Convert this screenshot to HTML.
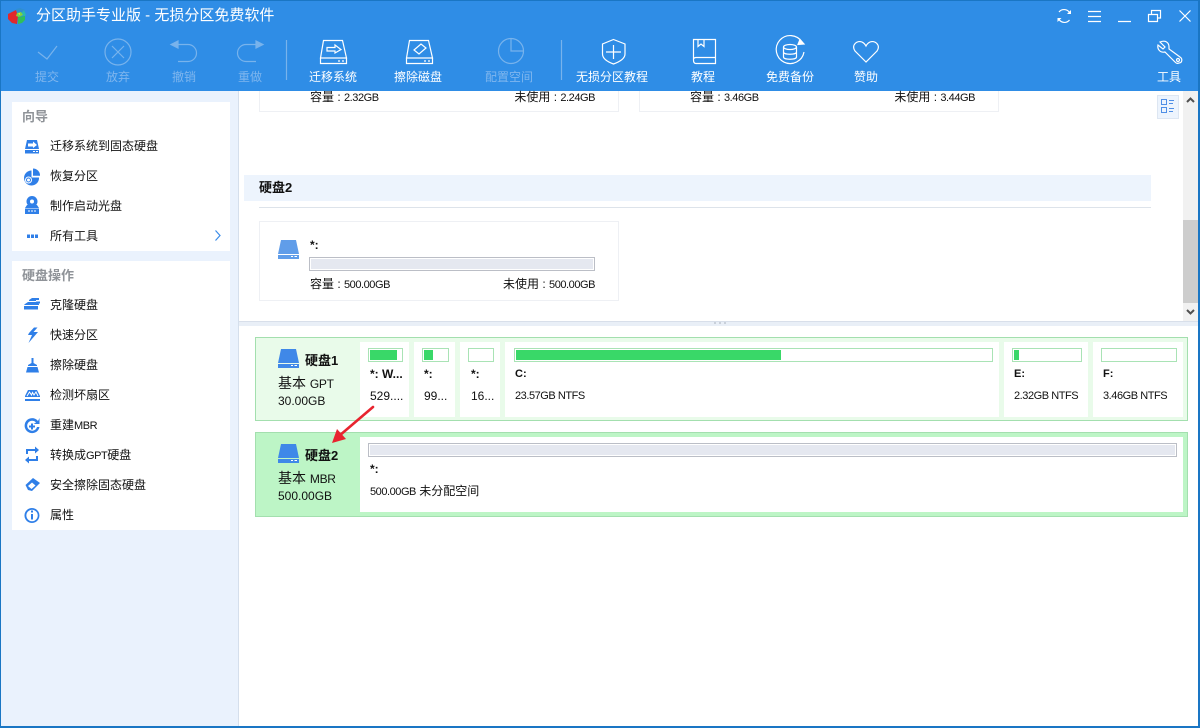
<!DOCTYPE html>
<html lang="zh"><head><meta charset="utf-8"><title>分区助手专业版</title>
<style>
html,body{margin:0;padding:0}
body{width:1200px;height:728px;position:relative;overflow:hidden;background:#fff;font-family:"Liberation Sans","Noto Sans CJK SC",sans-serif;font-size:12px;color:#111}
div,svg,span{position:absolute}
span span,.t span{position:static}
.t{line-height:16px;white-space:nowrap}
.l{font-size:11px;letter-spacing:-.45px}
.c{text-align:center;transform:translateX(-50%)}
.r{transform:translateX(-100%)}
.w{color:#fff}.d{color:#7fb6ee}
.b{font-weight:bold}
.bb{font-weight:bold;font-size:13px}
.h{color:#8f9398;font-weight:bold;font-size:13px}
.card{background:#fff}
.bar{border:1px solid #a9e3b5;background:#fff;height:12px;box-sizing:content-box}
.fill{background:#39d868;top:1px;left:1px;height:10px}
.gray{border:1px solid #bbbec6;background:#e5e8f0;outline:none;box-shadow:inset 0 0 0 1px #fff}
</style></head><body>
<div style="left:0;top:0;width:1200px;height:91px;background:#2f8de6"></div>
<div style="left:0;top:0;width:1200px;height:1px;background:#1a76c4"></div>
<div style="left:1px;top:91px;width:238px;height:636px;background:#eaf2fd"></div>
<div style="left:238px;top:91px;width:1px;height:636px;background:#d5dfec"></div>
<div style="left:12px;top:102px;width:218px;height:149px;background:#fff"></div>
<div style="left:12px;top:261px;width:218px;height:269px;background:#fff"></div>

<svg style="left:7px;top:7px" width="20" height="18" viewBox="0 0 20 18"><path d="M1 7 9 3 11 9 10 17 5 16 1 12Z" fill="#e2282c"/><path d="M9 2 13 1 18 3 14 7 10 5Z" fill="#2f8fd0"/><path d="M17 3 19 8 18 9 13 8Z" fill="#2bb8b0"/><path d="M10 6 14 5 16 8 12 10 9 9Z" fill="#7fd43f"/><path d="M11 6.500 13 6 13 8Z" fill="#e8e24a"/><path d="M11 10 18 9 18 13 15 16 11 17Z" fill="#2fbf5a"/></svg>
<span class="t w" style="left:36px;top:7px;font-size:15px;line-height:18px">分区助手专业版 - 无损分区免费软件</span>

<svg style="left:0;top:0" width="1200" height="91" fill="none" stroke="#fff" stroke-width="1.2">
<g stroke="#78b3ec">
<path d="M38 52 47 59 57 46"/><circle cx="118" cy="52" r="13"/><path d="M112 46 124 58M124 46 112 58"/>
<path d="M177 44.500H188a8.500 8.500 0 0 1 0 17H178"/><path d="M171 44.500 178 41V48Z" fill="#78b3ec"/>
<path d="M256 44.500H246a8.500 8.500 0 0 0 0 17H256"/><path d="M263 44.500 256 41V48Z" fill="#78b3ec"/>
<circle cx="511" cy="51" r="12.500"/><path d="M511 38.500V51H524"/>
<path d="M286.500 40V80M561.500 40V80"/>
</g>
<path d="M323.500 40.500H342.500L346.500 58H320.500ZM320.500 58H346.500V63.500H320.500Z"/><path d="M327 47.500H335V45L341 49.500 335 53V51H327Z"/><path d="M338 61H340M342 61H344"/>
<path d="M409.500 40.500H428.500L432.500 58H406.500ZM406.500 58H432.500V63.500H406.500Z"/><path d="M414 50 421 44 426 48 419 54Z"/><path d="M424 61H426M428 61H430"/>
<path d="M613.500 39.500 625 44V54C625 59 619 62 613.500 64 608 62 602.500 59 602.500 54V44Z"/><path d="M613.500 45V59M606 52H621"/>
<path d="M693.500 39.500H715.500V63.500H696C694 63.500 693.500 62 693.500 60ZM693.500 59C694 57.500 695 57.500 696 57.500H715M698 40V46.500L701 44 704 46.500V40"/>
<path d="M802 42A14 14 0 1 0 804 52"/><path d="M800 39.500 804 44 798 44.500Z" fill="#fff"/>
<ellipse cx="790" cy="47" rx="6.500" ry="2.500"/><path d="M783.500 47V57C783.500 60 796.500 60 796.500 57V47M783.500 52C783.500 55 796.500 55 796.500 52"/>
<path d="M866 62 855 51C851 45 857 40 862 42 864 43 865 44 866 46 867 44 868 43 870 42 875 40 881 45 877 51Z"/>
<path d="M1160 42C1165 40 1169 42 1169 47L1169 49 1180 57C1183 59 1182 63 1179 63 1177 64 1176 63 1175 62L1165 52C1160 53 1157 49 1158 45L1163 49 1165 47Z"/><circle cx="1178" cy="60" r="1.500"/>
<path d="M1059 12A6.500 6.500 0 0 1 1069.500 12.500M1069.500 20A6.500 6.500 0 0 1 1059 19.500"/><path d="M1071 10V14H1067ZM1057.500 22V18H1061.500Z" fill="#fff" stroke="none"/>
<path d="M1088 11.500H1101M1088 16.500H1101M1088 21.500H1101M1118 21.500H1131"/>
<path d="M1148.500 14.500H1157.500V21.500H1148.500ZM1151.500 14V10.500H1160.500V18H1158"/>
<path d="M1179.500 10.500 1190.500 21.500M1190.500 10.500 1179.500 21.500"/>
</svg>

<span class="t d c" style="left:47px;top:69px">提交</span>
<span class="t d c" style="left:118px;top:69px">放弃</span>
<span class="t d c" style="left:184px;top:69px">撤销</span>
<span class="t d c" style="left:250px;top:69px">重做</span>
<span class="t w c" style="left:333px;top:69px">迁移系统</span>
<span class="t w c" style="left:418px;top:69px">擦除磁盘</span>
<span class="t d c" style="left:509px;top:69px">配置空间</span>
<span class="t w c" style="left:612px;top:69px">无损分区教程</span>
<span class="t w c" style="left:703px;top:69px">教程</span>
<span class="t w c" style="left:790px;top:69px">免费备份</span>
<span class="t w c" style="left:866px;top:69px">赞助</span>
<span class="t w c" style="left:1169px;top:69px">工具</span>

<span class="t h" style="left:22px;top:109px">向导</span>
<span class="t" style="left:50px;top:138px">迁移系统到固态硬盘</span>
<span class="t" style="left:50px;top:168px">恢复分区</span>
<span class="t" style="left:50px;top:198px">制作启动光盘</span>
<span class="t" style="left:50px;top:228px">所有工具</span>
<span class="t h" style="left:22px;top:268px">硬盘操作</span>
<span class="t" style="left:50px;top:297px">克隆硬盘</span>
<span class="t" style="left:50px;top:327px">快速分区</span>
<span class="t" style="left:50px;top:357px">擦除硬盘</span>
<span class="t" style="left:50px;top:387px">检测坏扇区</span>
<span class="t" style="left:50px;top:417px">重建<span class="l">MBR</span></span>
<span class="t" style="left:50px;top:447px">转换成<span class="l">GPT</span>硬盘</span>
<span class="t" style="left:50px;top:477px">安全擦除固态硬盘</span>
<span class="t" style="left:50px;top:507px">属性</span>

<svg style="left:0;top:91px" width="240" height="440" viewBox="0 91 240 440" fill="#2f7fe8">
<path d="M27 140H37L39 149H25ZM25 150H39V153.500H25Z"/><path d="M28 143.500H33V141.500L37 145 33 148V146.500H28Z" fill="#fff"/><path d="M33 151.500H35M36 151.500H38" stroke="#fff"/>
<path d="M31.500 170.500V177.500H39A7.500 7.500 0 1 1 31.500 170.500Z"/><path d="M33 168.500A7 7 0 0 1 40 175.800H33Z"/><circle cx="28.500" cy="180" r="3.500" fill="#fff"/><circle cx="28.500" cy="180" r="2" fill="none" stroke="#2f7fe8"/>
<circle cx="32" cy="201.500" r="5.500"/><circle cx="32" cy="201.500" r="2" fill="#fff"/><path d="M27 205H37L39 208H25ZM25 208.500H39V214H25Z"/><path d="M28 211H30M31 211H33M34 211H36" stroke="#fff"/>
<path d="M27 234.500H30V238H27ZM31 234.500H34V238H31ZM35 234.500H38V238H35Z"/>
<path d="M25 304 28 302H37L39 304V305H24ZM24 306H38V309.500H24Z"/><path d="M29 300 32 298H39V300H36V301H29ZM36 301.500H40V303.500H37Z"/>
<path d="M34 327.500 29 333 28 335H32L28.500 343 38 332H33.500L37.500 327.500Z"/>
<path d="M31.500 358H33.500V363L37 365V366H28V365L31.500 363ZM27.500 367H37.500L39 372.500H26Z"/>
<path d="M25 396 28 390H37L40 396V397H25ZM25 399H40V401H25Z"/><path d="M27 396 29.500 392 31.500 395 32.500 392.500 34 395 36 392 38 396" stroke="#fff" fill="none"/>
<path d="M38 421A7.500 7.500 0 1 0 39.500 427H37A5 5 0 1 1 36 422.500L33.500 424H39.500V418Z"/><path d="M31 423.500H33V425.500H35V427.500H33V429.500H31V427.500H29V425.500H31Z"/>
<path d="M26 449H35V446.500L39 450 35 453.500V451H28V454H26ZM38 461H29V463.500L25 460 29 456.500V459H36V456H38Z"/>
<path d="M25.500 485 33 478 40 483 32 491 28 490Z"/><path d="M28 486 32 482.500 35.500 485.500 31.500 489Z" fill="#fff"/>
<path fill-rule="evenodd" d="M32 508A7.500 7.500 0 1 1 31.900 508ZM32 509.800A5.700 5.700 0 1 0 32.100 509.800Z"/><path d="M31 510.500H33V512.500H31ZM31 514H33V519.500H31Z"/>
<path d="M215.500 230.500 220 235.500 215.500 240.500" fill="none" stroke="#3b8ce8" stroke-width="1.200"/>
</svg>

<div style="left:259px;top:91px;width:358px;height:20px;border:1px solid #eef0f4;border-top:0;background:#fff"></div>
<div style="left:639px;top:91px;width:358px;height:20px;border:1px solid #eef0f4;border-top:0;background:#fff"></div>
<span class="t" style="left:310px;top:89px">容量 : <span class="l">2.32GB</span></span>
<span class="t r" style="left:595px;top:89px">未使用 : <span class="l">2.24GB</span></span>
<span class="t" style="left:690px;top:89px">容量 : <span class="l">3.46GB</span></span>
<span class="t r" style="left:975px;top:89px">未使用 : <span class="l">3.44GB</span></span>

<div style="left:244px;top:175px;width:907px;height:26px;background:#edf4fd"></div>
<span class="t bb" style="left:259px;top:180px">硬盘2</span>
<div style="left:259px;top:207px;width:892px;height:1px;background:#dde3ea"></div>
<div style="left:259px;top:221px;width:358px;height:78px;border:1px solid #eef0f4"></div>
<svg style="left:278px;top:239px" width="22" height="20"><path d="M3 1H18L21 15H0Z" fill="#609de9"/><path d="M0 16H21V20H0Z" fill="#609de9"/><path d="M13 17.500H15M16.500 17.500H19" stroke="#fff"/></svg>
<span class="t b" style="left:310px;top:237px">*:</span>
<div class="gray" style="left:309px;top:257px;width:284px;height:12px"></div>
<span class="t" style="left:310px;top:276px">容量 : <span class="l">500.00GB</span></span>
<span class="t r" style="left:595px;top:276px">未使用 : <span class="l">500.00GB</span></span>

<div style="left:1157px;top:95px;width:20px;height:22px;background:#edf4fd;border:1px solid #dde6f2"></div>
<svg style="left:1160px;top:98px" width="16" height="18" fill="none" stroke="#4f8fe6"><path d="M1.500 1.500H6.500V6.500H1.500ZM1.500 9.500H6.500V14.500H1.500ZM9 2.500H14M9 5.500H13M9 10.500H14M9 13.500H13"/></svg>

<div style="left:1183px;top:91px;width:15px;height:230px;background:#f1f1f1"></div>
<div style="left:1183px;top:220px;width:15px;height:83px;background:#cdcdcd"></div>
<svg style="left:1183px;top:91px" width="15" height="230" fill="none" stroke="#505050" stroke-width="2"><path d="M4 11 7.500 7.500 11 11M4 219 7.500 222.500 11 219"/></svg>

<div style="left:239px;top:321px;width:959px;height:5px;background:#e9eff7;border-top:1px solid #d8dfea;box-sizing:border-box"></div>
<svg style="left:713px;top:322px" width="14" height="4"><path d="M1 1H3M6 1H8M11 1H13" stroke="#a9b1bd"/></svg>

<div style="left:255px;top:337px;width:931px;height:82px;background:#e9fbea;border:1px solid #a3dfae"></div>
<div style="left:255px;top:432px;width:931px;height:83px;background:#bdf5c6;border:1px solid #a3dfae"></div>

<div class="card" style="left:360px;top:342px;width:49px;height:75px"></div>
<div class="card" style="left:414px;top:342px;width:41px;height:75px"></div>
<div class="card" style="left:460px;top:342px;width:40px;height:75px"></div>
<div class="card" style="left:505px;top:342px;width:494px;height:75px"></div>
<div class="card" style="left:1004px;top:342px;width:84px;height:75px"></div>
<div class="card" style="left:1093px;top:342px;width:90px;height:75px"></div>
<div class="card" style="left:360px;top:437px;width:823px;height:75px"></div>

<div class="bar" style="left:368px;top:348px;width:33px"><div class="fill" style="width:27px"></div></div>
<div class="bar" style="left:422px;top:348px;width:25px"><div class="fill" style="width:9px"></div></div>
<div class="bar" style="left:468px;top:348px;width:24px"></div>
<div class="bar" style="left:514px;top:348px;width:477px"><div class="fill" style="width:265px"></div></div>
<div class="bar" style="left:1012px;top:348px;width:68px"><div class="fill" style="width:5px"></div></div>
<div class="bar" style="left:1101px;top:348px;width:74px"></div>
<div class="gray" style="left:368px;top:443px;width:807px;height:12px"></div>

<span class="t b" style="left:370px;top:366px">*: W...</span>
<span class="t b" style="left:424px;top:366px">*:</span>
<span class="t b" style="left:471px;top:366px">*:</span>
<span class="t b" style="left:515px;top:366px;font-size:11px">C:</span>
<span class="t b" style="left:1014px;top:366px;font-size:11px">E:</span>
<span class="t b" style="left:1103px;top:366px;font-size:11px">F:</span>
<span class="t" style="left:370px;top:388px">529....</span>
<span class="t" style="left:424px;top:388px">99...</span>
<span class="t" style="left:471px;top:388px">16...</span>
<span class="t l" style="left:515px;top:388px">23.57GB NTFS</span>
<span class="t l" style="left:1014px;top:388px">2.32GB NTFS</span>
<span class="t l" style="left:1103px;top:388px">3.46GB NTFS</span>
<span class="t b" style="left:370px;top:461px">*:</span>
<span class="t" style="left:370px;top:483px"><span class="l">500.00GB</span> 未分配空间</span>

<svg style="left:278px;top:348px" width="22" height="20"><path d="M3 1H18L21 15H0Z" fill="#3f88e8"/><path d="M0 16H21V20H0Z" fill="#3f88e8"/><path d="M13 17.500H15M16.500 17.500H19" stroke="#fff"/></svg>
<svg style="left:278px;top:443px" width="22" height="20"><path d="M3 1H18L21 15H0Z" fill="#3f88e8"/><path d="M0 16H21V20H0Z" fill="#3f88e8"/><path d="M13 17.500H15M16.500 17.500H19" stroke="#fff"/></svg>
<span class="t bb" style="left:305px;top:353px">硬盘1</span>
<span class="t" style="left:278px;top:375px;font-size:14px">基本 <span style="font-size:12px;letter-spacing:-.3px">GPT</span></span>
<span class="t" style="left:278px;top:393px">30.00GB</span>
<span class="t bb" style="left:305px;top:448px">硬盘2</span>
<span class="t" style="left:278px;top:470px;font-size:14px">基本 <span style="font-size:12px;letter-spacing:-.3px">MBR</span></span>
<span class="t" style="left:278px;top:488px">500.00GB</span>

<svg style="left:325px;top:400px" width="55" height="50"><path d="M48 7 14 36" stroke="#e8242f" stroke-width="2.600" stroke-linecap="round"/><path d="M7 43 12 29 21 39Z" fill="#e8242f"/></svg>

<div style="left:0;top:91px;width:1px;height:637px;background:#1a76c4"></div>
<div style="left:1198px;top:0;width:2px;height:728px;background:#1a76c4"></div>
<div style="left:0;top:0;width:1px;height:91px;background:#1a76c4"></div>
<div style="left:0;top:726px;width:1200px;height:2px;background:#1a76c4"></div>
</body></html>
